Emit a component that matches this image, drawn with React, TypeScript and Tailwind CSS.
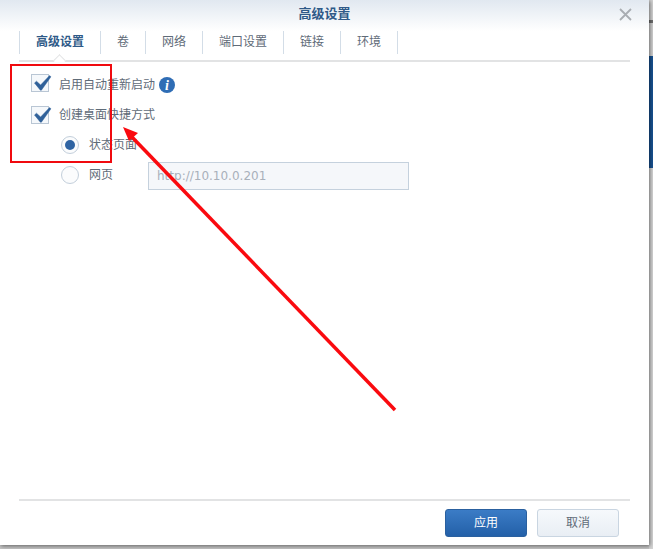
import React from "react";

const font = { fontFamily: '"Liberation Sans", "Noto Sans CJK SC", sans-serif' };

function Check({ className }: { className: string }) {
  return (
    <span className={`relative block w-[18px] h-[18px] shrink-0 border border-[#b9c6d4] bg-[#f5f8fb] ${className}`}>
      <svg className="absolute left-[-1px] top-[-1px]" width="22" height="20" viewBox="0 0 22 20">
        <path d="M3.5 9 L5.5 7.2 L9.6 11 L18.6 1.6 L19.9 2.8 L10.4 16.2 L9.4 16.2 Z" fill="#2f6099" stroke="#2f6099" strokeWidth="0.5" strokeLinejoin="round" />
      </svg>
    </span>
  );
}

function Radio({ on }: { on?: boolean }) {
  return (
    <span className="flex items-center justify-center w-[18px] h-[18px] shrink-0 rounded-full border border-[#c3cfdb] bg-[#fbfcfd]">
      {on && <span className="block w-[10px] h-[10px] rounded-full bg-[#2f64a3]" />}
    </span>
  );
}

const tabs = [
  { t: "高级设置", w: "w-[81px]", active: true },
  { t: "卷", w: "w-[45px]" },
  { t: "网络", w: "w-[57px]" },
  { t: "端口设置", w: "w-[81px]" },
  { t: "链接", w: "w-[57px]" },
  { t: "环境", w: "w-[57px]" },
];

export default function App() {
  return (
    <div className="relative w-[653px] h-[549px] overflow-hidden bg-[#c4c4c4]" style={font}>
      <div className="flex h-full">
        <div className="relative z-10 w-[649px] h-[545px] flex flex-col bg-white shrink-0 shadow-[1px_1px_4px_rgba(0,0,0,0.5)]">
          <div className="relative h-[31px] shrink-0 bg-gradient-to-b from-[#e1e8f0] to-white flex items-start justify-center pt-[5px]">
            <span className="text-[13px] leading-[18px] font-bold text-[#2f5a88]">高级设置</span>
            <svg className="absolute right-[17px] top-[8px]" width="13" height="13" viewBox="0 0 13 13">
              <path d="M1 1 L12 12 M12 1 L1 12" stroke="#a9adb2" strokeWidth="1.8" />
            </svg>
          </div>

          <div className="relative mx-[19px] h-[31px] shrink-0 border-b-2 border-[#e2e3e4]">
            <div className="flex h-[23px] border-l border-[#d3dde7]">
              {tabs.map((tab) => (
                <div
                  key={tab.t}
                  className={`${tab.w} shrink-0 flex items-center justify-center border-r border-[#d3dde7] text-[12px] leading-[23px] ${
                    tab.active ? "font-bold text-[#2f5a88]" : "text-[#5f6b78]"
                  }`}
                >
                  {tab.t}
                </div>
              ))}
            </div>
            <span className="absolute left-[36px] top-[25px] w-[9px] h-[9px] rotate-45 bg-white border-l border-t border-[#e2e3e4]" />
          </div>

          <div className="flex-1 flex flex-col pl-[31px] pt-[8px] text-[12px] text-[#5f6b78]">
            <div className="flex items-center h-[30px]">
              <Check className="-mt-[4px]" />
              <span className="ml-[10px]">启用自动重新启动</span>
              <span className="ml-[4px] flex items-center justify-center w-[16px] h-[16px] rounded-full bg-[#2f6db5] text-white text-[14px] font-bold italic" style={{ fontFamily: '"Liberation Serif", serif' }}>
                i
              </span>
            </div>
            <div className="flex items-center h-[30px]">
              <Check className="-mt-[1px]" />
              <span className="ml-[10px]">创建桌面快捷方式</span>
            </div>
            <div className="flex items-center h-[30px] pl-[30px]">
              <Radio on />
              <span className="ml-[10px]">状态页面</span>
            </div>
            <div className="flex items-center h-[30px] pl-[30px]">
              <Radio />
              <span className="ml-[10px] w-[59px]">网页</span>
              <div className="mt-[2px] w-[261px] h-[28px] flex items-center pl-[8px] border border-[#c5d1dd] bg-[#f5f7fa] text-[12px] text-[#a8b0ba]" style={{ fontFamily: '"DejaVu Sans", sans-serif' }}>
                http://10.10.0.201
              </div>
            </div>
          </div>

          <div className="mx-[19px] h-[46px] shrink-0 border-t-2 border-[#e2e3e4] flex items-start justify-end gap-[10px] pt-[8px] pr-[10px]">
            <button className="w-[82px] h-[28px] rounded-[3px] border border-[#2a609f] bg-gradient-to-b from-[#3b7cc6] to-[#2360a8] text-white text-[12px] -translate-x-px">
              应用
            </button>
            <button className="w-[82px] h-[28px] rounded-[3px] border border-[#c9d5e1] bg-gradient-to-b from-[#f6f9fc] to-[#e9eef4] text-[#5f6b78] text-[12px] -translate-x-px">
              取消
            </button>
          </div>
        </div>

        <div className="w-[4px] h-full flex flex-col shrink-0">
          <div className="h-[20px] bg-[#d2d2d2]" />
          <div className="h-[3px] bg-[#6e6e6e]" />
          <div className="h-[33px] bg-[#d0d0d0]" />
          <div className="h-[112px] bg-[#175191]" />
          <div className="flex-1 bg-[#d4d4d4]" />
        </div>
      </div>

      {/* annotation overlay */}
      <div className="absolute z-20 left-[10px] top-[64px] w-[102px] h-[99px] border-[2px] border-[#f00a0f]" />
      <svg className="absolute z-20 left-0 top-0 pointer-events-none" width="653" height="549" viewBox="0 0 653 549">
        <path d="M395 410 L131 136" stroke="#fa0a0f" strokeWidth="3.5" />
        <path d="M123 127 L138 133 L129 141 Z" fill="#fa0a0f" />
      </svg>
    </div>
  );
}
